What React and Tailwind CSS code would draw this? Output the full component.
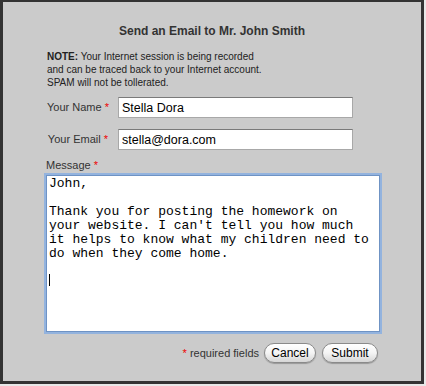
import React from 'react';

const message = `John,

Thank you for posting the homework on
your website. I can't tell you how much
it helps to know what my children need to
do when they come home.

`;

const Field = ({ label, value }) => (
    <div className="flex items-center h-[21px]">
        <label className="w-[63px] whitespace-nowrap text-right text-[11px] text-[#333] pr-[2px]">
            {label} <span className="text-[#e00]">*</span>
        </label>
        <input
            readOnly
            value={value}
            className="ml-[8px] w-[235px] h-[21px] bg-white border border-[#a8a8a8] border-t-[#7a7a7a] px-[3px] text-[12.5px] text-black outline-none"
        />
    </div>
);

const PillButton = ({ children, width }) => (
    <button className={`${width} h-[20px] rounded-full border border-[#8a8a8a] bg-gradient-to-b from-white via-[#f4f4f4] to-[#d6d6d6] shadow-[0_1px_1px_rgba(0,0,0,0.25)] text-[12px] leading-none text-black`}>
        {children}
    </button>
);

export default function App() {
    return (
        <div className="w-[426px] h-[386px] bg-[#e8e8e8]" style={{ fontFamily: '"Liberation Sans", Arial, sans-serif' }}>
            <div className="w-[424px] h-[384px] border-[3px] border-t-[2px] border-[#333] bg-[#cbcbcb] flex flex-col">
                {/* Title */}
                <h1 className="mt-[21px] text-center text-[12px] font-bold text-[#333] leading-[16px]">
                    Send an Email to Mr. John Smith
                </h1>

                {/* Warning note */}
                <p className="mt-[11px] ml-[44px] text-[10px] leading-[13px] text-[#222]">
                    <b>NOTE:</b> Your Internet session is being recorded<br />
                    and can be traced back to your Internet account.<br />
                    SPAM will not be tollerated.
                </p>

                <div className="mt-[8px] ml-[44px] flex flex-col gap-[11px]">
                    <Field label="Your Name" value="Stella Dora" />
                    <Field label="Your Email" value="stella@dora.com" />
                </div>

                {/* Message */}
                <div className="mt-[9px] ml-[43px] text-[11px] leading-[13px] text-[#333]">
                    Message <span className="text-[#e00]">*</span>
                </div>
                <div className="relative ml-[43px] mt-[3px] w-[334px] h-[157px]">
                    <textarea
                        readOnly
                        value={message}
                        className="w-full h-full resize-none bg-white border border-[#6f93c4] shadow-[0_0_0_2px_#93b3de] px-[2px] py-[1px] text-[13px] leading-[14px] text-black outline-none overflow-hidden"
                        style={{ fontFamily: '"Liberation Mono", "Courier New", monospace' }}
                    />
                    <span className="absolute left-[3px] top-[99px] w-[1px] h-[12px] bg-black" />
                </div>

                {/* Footer */}
                <div className="mt-[11px] mr-[43px] flex items-center justify-end gap-[6px]">
                    <span className="mr-[-1px] text-[11px] text-[#333]">
                        <span className="text-[#e00]">*</span> required fields
                    </span>
                    <PillButton width="w-[52px]">Cancel</PillButton>
                    <PillButton width="w-[56px]">Submit</PillButton>
                </div>
            </div>
        </div>
    );
}
